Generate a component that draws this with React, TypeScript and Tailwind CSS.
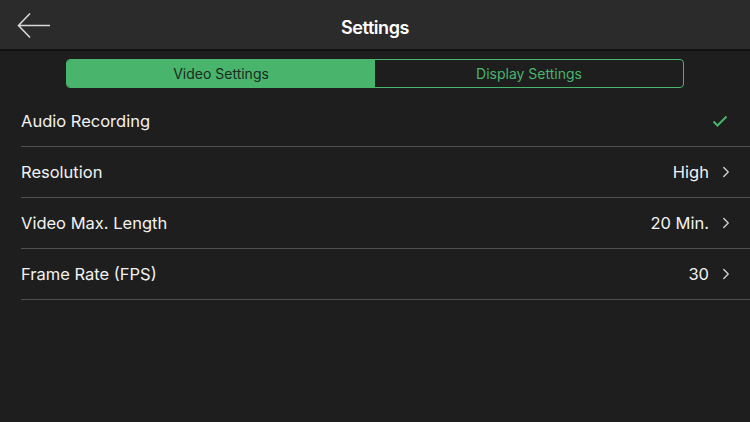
import { ChevronRight } from 'lucide-react'

const rows = [
  { label: 'Audio Recording', value: '', check: true },
  { label: 'Resolution', value: 'High' },
  { label: 'Video Max. Length', value: '20 Min.' },
  { label: 'Frame Rate (FPS)', value: '30' },
]

export default function App() {
  return (
    <div className="flex h-[422px] w-[750px] flex-col bg-[#1e1e1e] font-['Inter','Liberation_Sans',sans-serif] text-white">
      <header className="relative flex h-[51px] shrink-0 items-center justify-center border-b-2 border-[#121212] bg-[#2b2b2b]">
        <svg className="absolute left-[17px] top-[12px]" width="34" height="28" viewBox="0 0 34 28" fill="none">
          <path d="M33 13.5H2M13 1.5L1.5 13.5L13 25.5" stroke="#d8d8d8" strokeWidth="1.6" />
        </svg>
        <h1 className="pt-[5px] text-[18px] font-semibold tracking-tight">Settings</h1>
      </header>

      <div className="flex justify-center pt-[8px]">
        <div className="flex h-[29px] w-[618px] overflow-hidden rounded-[4px] border border-[#48b46c] text-[14px]">
          <div className="flex flex-1 items-center justify-center bg-[#48b46c] text-[#1c2a20]">Video Settings</div>
          <div className="flex flex-1 items-center justify-center text-[#48b46c]">Display Settings</div>
        </div>
      </div>

      <ul className="mt-[8px] pl-[21px]">
        {rows.map((r) => (
          <li key={r.label} className="flex h-[51px] items-center justify-between border-b border-[#505050] pr-[15px] text-[16.5px] text-[#f2f2f2]">
            <span>{r.label}</span>
            {r.check ? (
              <svg width="16" height="14" viewBox="0 0 16 14" fill="none" className="mr-[7px]">
                <path d="M1.5 7.5L5.5 11.5L14.5 2.5" stroke="#48b46c" strokeWidth="2" />
              </svg>
            ) : (
              <span className="flex items-center gap-[8px]">
                {r.value}
                <ChevronRight size={18} strokeWidth={1.8} className="text-[#d0d0d0]" />
              </span>
            )}
          </li>
        ))}
      </ul>
    </div>
  )
}
